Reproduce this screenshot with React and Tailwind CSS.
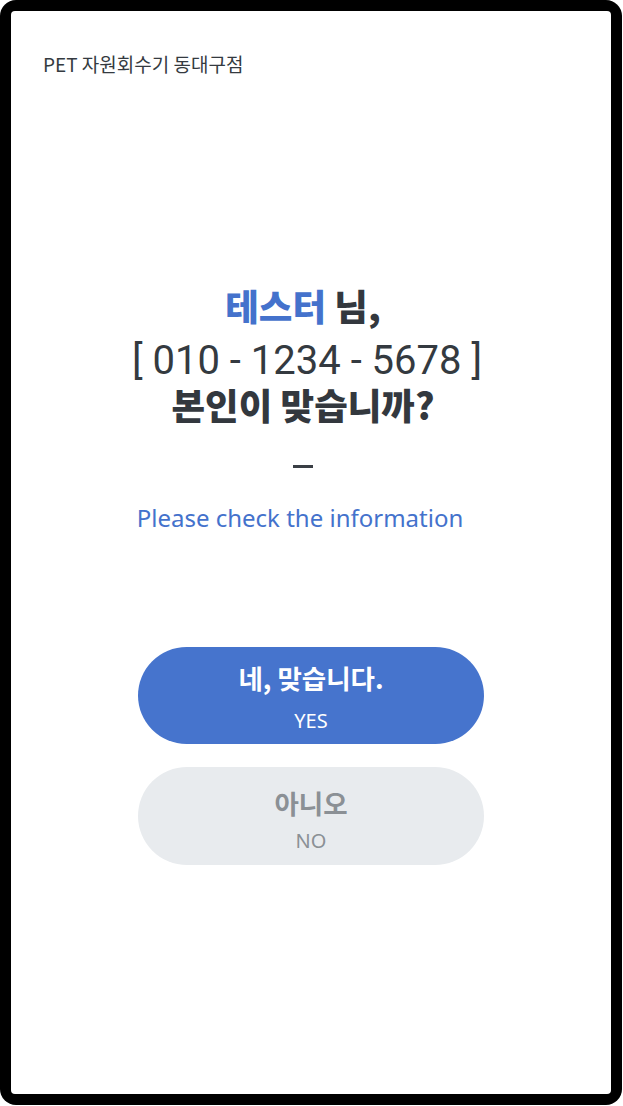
export default function App() {
  return (
    <div className="w-[623px] h-[1106px] bg-white">
      <div className="w-[622px] h-[1105px] bg-black rounded-[16px] p-[11px] flex">
        <div className="flex-1 bg-white rounded-[4px] flex flex-col font-['Noto_Sans_CJK_KR','Noto_Sans',sans-serif]">
          <div className="pl-[32px] pt-[40px] text-[19px] leading-[26px] text-[#343a40]">
            PET 자원회수기 동대구점
          </div>
          <div className="flex flex-col items-center mt-[202px]">
            <div className="flex flex-col items-center pr-[16px]">
              <div className="text-[36.5px] leading-[54px] font-extrabold text-[#33383e]">
                <span className="text-[#4472cc]">테스터</span> 님,
              </div>
              <div className="mt-[6px] pl-[8px] text-[40px] leading-[44px] text-[#343a40] font-['Roboto','Noto_Sans_CJK_KR',sans-serif]">
                [ 010 - 1234 - 5678 ]
              </div>
              <div className="text-[36.5px] leading-[44px] font-extrabold text-[#33383e]">
                본인이 맞습니까?
              </div>
              <div className="mt-[38px] w-[20px] h-[3px] bg-[#3a3f45]"></div>
              <div className="mt-[34px] pr-[6px] text-[24px] leading-[32px] text-[#4472cc] font-['Noto_Sans','Noto_Sans_CJK_KR',sans-serif]">
                Please check the information
              </div>
            </div>
            <button className="mt-[113px] w-[346px] h-[97px] rounded-full bg-[#4674cd] flex flex-col items-center pt-[15px]">
              <span className="text-[26.5px] leading-[32px] font-bold text-white">네, 맞습니다.</span>
              <span className="mt-[13px] text-[20px] leading-[28px] text-white font-['Noto_Sans',sans-serif]">YES</span>
            </button>
            <button className="mt-[23px] w-[346px] h-[98px] rounded-full bg-[#e8ebee] flex flex-col items-center pt-[20px]">
              <span className="text-[26.5px] leading-[32px] font-bold text-[#8b9095]">아니오</span>
              <span className="mt-[8px] text-[20px] leading-[28px] text-[#8b9095] font-['Noto_Sans',sans-serif]">NO</span>
            </button>
          </div>
        </div>
      </div>
    </div>
  );
}
